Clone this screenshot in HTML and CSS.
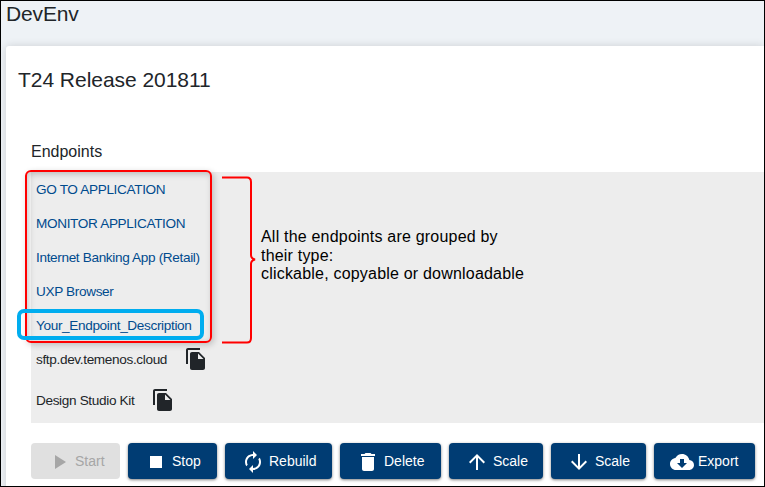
FILE: index.html
```html
<!DOCTYPE html>
<html lang="en">
<head>
<meta charset="utf-8">
<title>DevEnv</title>
<link rel="stylesheet" href="styles.css">
</head>
<body>
<div class="page">
  <h1 class="page-title">DevEnv</h1>
  <main class="card">
    <h2 class="card-title">T24 Release 201811</h2>
    <h3 class="section-title">Endpoints</h3>
    <section class="endpoints">
      <a class="row link">GO TO APPLICATION</a>
      <a class="row link">MONITOR APPLICATION</a>
      <a class="row link">Internet Banking App (Retail)</a>
      <a class="row link">UXP Browser</a>
      <a class="row link">Your_Endpoint_Description</a>
      <div class="row"><span>sftp.dev.temenos.cloud</span><svg class="copy" viewBox="0 0 24 24"><path d="M16 1H4c-1.100 0-2 .9-2 2v14h2V3h12V1zm-1 4 6 6v10c0 1.100-.9 2-2 2H7.990C6.890 23 6 22.100 6 21l.01-14c0-1.100.89-2 1.990-2h7zm-1 7h5.500L14 6.500V12z"/></svg></div>
      <div class="row kit"><span>Design Studio Kit</span><svg class="copy" viewBox="0 0 24 24"><path d="M16 1H4c-1.100 0-2 .9-2 2v14h2V3h12V1zm-1 4 6 6v10c0 1.100-.9 2-2 2H7.990C6.890 23 6 22.100 6 21l.01-14c0-1.100.89-2 1.990-2h7zm-1 7h5.500L14 6.500V12z"/></svg></div>
      <div class="group-box"></div>
      <div class="highlight"></div>
      <svg class="bracket" viewBox="0 0 36 170"><path d="M1 2.500H26Q30 2.500 30 7V80Q30 83.500 34 84.500Q30 85.500 30 89V163Q30 167.500 26 167.500H1"/></svg>
      <p class="note">All the endpoints are grouped by<br>their type:<br>clickable, copyable or downloadable</p>
    </section>
    <div class="actions">
      <button class="btn start" disabled><svg viewBox="0 0 24 24"><path d="M8 5v14l11-7z"/></svg>Start</button>
      <button class="btn stop"><svg viewBox="0 0 24 24"><path d="M6 6h12v12H6z"/></svg>Stop</button>
      <button class="btn rebuild"><svg viewBox="0 0 24 24"><path d="M12 6v3l4-4-4-4v3c-4.420 0-8 3.580-8 8 0 1.570.46 3.030 1.240 4.260L6.700 14.800c-.45-.83-.7-1.790-.7-2.800 0-3.310 2.690-6 6-6zm6.760 1.740L17.300 9.200c.44.840.7 1.790.7 2.800 0 3.310-2.690 6-6 6v-3l-4 4 4 4v-3c4.420 0 8-3.580 8-8 0-1.570-.46-3.030-1.240-4.260z"/></svg>Rebuild</button>
      <button class="btn delete"><svg viewBox="0 0 24 24"><path d="M6 19c0 1.100.9 2 2 2h8c1.100 0 2-.9 2-2V7H6v12zM19 4h-3.500l-1-1h-5l-1 1H5v2h14V4z"/></svg>Delete</button>
      <button class="btn up"><svg viewBox="0 0 24 24"><path d="M4 12l1.410 1.410L11 7.830V20h2V7.830l5.580 5.590L20 12l-8-8-8 8z"/></svg>Scale</button>
      <button class="btn down"><svg viewBox="0 0 24 24"><path d="M20 12l-1.410-1.410L13 16.170V4h-2v12.170l-5.580-5.590L4 12l8 8 8-8z"/></svg>Scale</button>
      <button class="btn export"><svg viewBox="0 0 24 24"><path d="M19.350 10.040C18.670 6.590 15.640 4 12 4 9.110 4 6.600 5.640 5.350 8.040 2.340 8.360 0 10.910 0 14c0 3.310 2.690 6 6 6h13c2.760 0 5-2.240 5-5 0-2.640-2.050-4.780-4.650-4.960zM17 13l-5 5-5-5h3V9h4v4h3z"/></svg>Export</button>
    </div>
  </main>
</div>
</body>
</html>
```

FILE: styles.css
```css
* { box-sizing: border-box; }
body {
  margin: 0;
  font-family: "Liberation Sans", Arial, sans-serif;
  color: #212529;
}
.page {
  height: 487px;
  overflow: hidden;
  border: 1px solid #000;
  background: #eef2f6;
  padding-left: 5px;
}
h1, h2, h3, p { margin: 0; font-weight: 400; }
.page-title {
  height: 45px;
  font-size: 21px;
  line-height: 26px;
  letter-spacing: -.15px;
}
.card {
  height: 460px;
  background: #fff;
  border-radius: 3px 0 0;
  box-shadow: 0 0 8px rgba(0, 0, 0, .14);
  padding: 22px 0 0 12px;
}
.card-title {
  font-size: 21px;
  line-height: 24px;
  letter-spacing: -.04px;
}
.section-title {
  margin: 50px 0 0 13px;
  font-size: 16px;
  line-height: 20px;
}
.endpoints {
  position: relative;
  display: flex;
  flex-direction: column;
  height: 251px;
  margin: 10px 0 0 13px;
  padding-left: 5px;
  background: #ededed;
  font-size: 13.600px;
  letter-spacing: -.35px;
}
.row {
  display: flex;
  align-items: center;
  flex: none;
  height: 34px;
}
.link { color: #004b8d; }
.kit { height: 48px; }
.copy { width: 24px; height: 24px; margin-left: 17px; fill: #212529; }
.group-box {
  position: absolute;
  left: -6px;
  top: -2px;
  width: 187px;
  height: 173px;
  border: 2px solid #f00;
  border-radius: 6px;
  box-shadow: 2px 2px 6px rgba(0, 0, 0, .2), inset 2px 2px 6px rgba(0, 0, 0, .22);
}
.highlight {
  position: absolute;
  left: -14px;
  top: 137px;
  width: 187px;
  height: 31px;
  border: 4px solid #00adef;
  border-radius: 7px;
}
.bracket {
  position: absolute;
  left: 190px;
  top: 3px;
  width: 36px;
  height: 170px;
  fill: none;
  stroke: #f00;
  stroke-width: 2;
}
.note {
  position: absolute;
  left: 230px;
  top: 56px;
  color: #000;
  font-size: 16px;
  line-height: 18.500px;
  letter-spacing: .2px;
  white-space: nowrap;
}
.actions {
  display: flex;
  gap: 8px;
  margin: 20px 0 0 13px;
}
.btn {
  display: flex;
  align-items: center;
  flex: none;
  gap: 4px;
  height: 36px;
  border: 0;
  border-radius: 4px;
  padding: 0 0 0 16px;
  background: #003c73;
  color: #fff;
  font: 14px "Liberation Sans", Arial, sans-serif;
  box-shadow: 0 1px 3px rgba(0, 0, 0, .5);
}
.btn svg { flex: none; width: 24px; height: 24px; margin-top: 2px; fill: currentColor; }
.start { width: 89px; background: #e0e0e0; color: #a6a6a6; box-shadow: none; }
.stop { width: 89px; }
.rebuild { width: 107px; }
.delete { width: 101px; }
.up { width: 94px; }
.down { width: 95px; }
.export { width: 101px; }
```
